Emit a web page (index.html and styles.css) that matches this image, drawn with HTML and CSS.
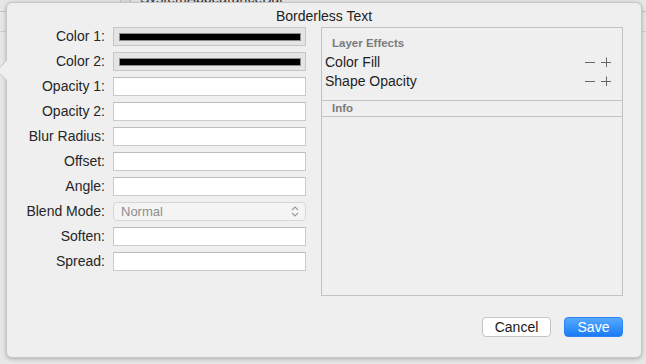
FILE: index.html
```html
<!DOCTYPE html>
<html lang="en">
<head>
  <meta charset="UTF-8" />
  <title>Borderless Text</title>
  <link rel="stylesheet" href="styles.css">
</head>
<body>

  <div class="backdrop">
    <div class="toolbar">
      <span class="tab-edge"></span>
      <span class="tab-title">SystemAppearanceBar</span>
    </div>
    <div class="strip"></div>
  </div>

  <div class="popover">
    <h1 class="title">Borderless Text</h1>

    <div class="content">
      <form class="fields">
        <label>Color 1:</label>
        <div class="well"><span></span></div>

        <label>Color 2:</label>
        <div class="well"><span></span></div>

        <label>Opacity 1:</label>
        <input type="text" />

        <label>Opacity 2:</label>
        <input type="text" />

        <label>Blur Radius:</label>
        <input type="text" />

        <label>Offset:</label>
        <input type="text" />

        <label>Angle:</label>
        <input type="text" />

        <label>Blend Mode:</label>
        <div class="select">
          <span>Normal</span>
          <svg width="8" height="11" viewBox="0 0 8 11">
            <path d="M1 4 L4 1 L7 4 M1 7 L4 10 L7 7" fill="none" stroke="#9a9a9a" stroke-width="1.1" />
          </svg>
        </div>

        <label>Soften:</label>
        <input type="text" />

        <label>Spread:</label>
        <input type="text" />
      </form>

      <div class="panel">
        <div class="effects">
          <h2>Layer Effects</h2>
          <div class="effect">
            <span>Color Fill</span>
            <span class="ctrls">
              <svg width="10" height="10" viewBox="0 0 10 10"><path d="M0 5.5 H10" stroke="#666" /></svg>
              <svg width="10" height="10" viewBox="0 0 10 10"><path d="M0 5.5 H10 M5.5 0.5 V10.5" stroke="#666" /></svg>
            </span>
          </div>
          <div class="effect">
            <span>Shape Opacity</span>
            <span class="ctrls">
              <svg width="10" height="10" viewBox="0 0 10 10"><path d="M0 5.5 H10" stroke="#666" /></svg>
              <svg width="10" height="10" viewBox="0 0 10 10"><path d="M0 5.5 H10 M5.5 0.5 V10.5" stroke="#666" /></svg>
            </span>
          </div>
        </div>
        <h2 class="info-head">Info</h2>
        <div class="info"></div>
      </div>
    </div>

    <div class="buttons">
      <button class="btn">Cancel</button>
      <button class="btn primary">Save</button>
    </div>
  </div>

</body>
</html>
```

FILE: styles.css
```css
* {
  margin: 0;
  padding: 0;
  box-sizing: border-box;
}

body {
  font-family: 'Liberation Sans', Arial, sans-serif;
  font-size: 14px;
  color: #1e1e1e;
  background: #e7e7e7;
  width: 646px;
  height: 364px;
  overflow: hidden;
  position: relative;
}

/* window behind the popover */
.toolbar {
  height: 12px;
  border-bottom: 1px solid #c4c4c4;
  display: flex;
  align-items: flex-end;
  overflow: hidden;
}

.tab-edge {
  width: 11px;
  height: 12px;
  margin-left: 120px;
  border-left: 1px solid #c8c8c8;
  border-right: 1px solid #b8b8b8;
  background: #dcdcdc;
}

.tab-title {
  font-size: 14px;
  line-height: 14px;
  margin-left: 9px;
  margin-bottom: 6px;
  color: #333;
}

.strip {
  height: 20px;
  border-bottom: 1px solid #cfcfcf;
}

/* popover sheet */
.popover {
  position: absolute;
  left: 6px;
  top: 2px;
  width: 636px;
  height: 356px;
  background: #efefef;
  border: 1px solid #c6c6c6;
  border-radius: 6px;
  box-shadow: 0 1px 4px rgba(0, 0, 0, 0.25);
  display: flex;
  flex-direction: column;
}

.popover::before {
  content: '';
  position: absolute;
  left: -8px;
  top: 60px;
  width: 14px;
  height: 14px;
  background: #efefef;
  border-left: 1px solid #c6c6c6;
  border-bottom: 1px solid #c6c6c6;
  transform: rotate(45deg);
}

.title {
  font-size: 14px;
  font-weight: normal;
  text-align: center;
  line-height: 16px;
  padding: 5px 0 3px;
  color: #222;
}

.content {
  display: flex;
  height: 269px;
  padding-right: 18px;
}

.fields {
  display: grid;
  grid-template-columns: 98px 193px;
  grid-auto-rows: 19px;
  column-gap: 8px;
  row-gap: 6px;
  align-content: start;
  width: 299px;
}

.fields label {
  text-align: right;
  line-height: 19px;
  color: #262626;
  white-space: nowrap;
}

.fields input {
  height: 19px;
  border: 1px solid #cacaca;
  border-top-color: #bdbdbd;
  background: #fff;
  outline: none;
}

.well {
  border: 1px solid #c6c6c6;
  background: #e4e4e4;
  padding: 5px 4px 5px 5px;
}

.well span {
  display: block;
  height: 8px;
  background: #000;
  border: 1px solid #8c8c8c;
}

.select {
  display: flex;
  align-items: center;
  justify-content: space-between;
  padding: 0 6px 0 7px;
  border: 1px solid #d6d6d6;
  border-radius: 4px;
  background: #f4f4f4;
  color: #8e8e8e;
  font-size: 13px;
}

.panel {
  flex: 1;
  margin-left: 15px;
  border: 1px solid #c2c2c2;
  display: flex;
  flex-direction: column;
}

.panel h2 {
  font-size: 11.5px;
  font-weight: bold;
  color: #7b7b7b;
  padding-left: 10px;
}

.effects {
  height: 72px;
  padding-top: 8px;
}

.effects h2 {
  line-height: 14px;
  margin-bottom: 2px;
}

.effect {
  display: flex;
  justify-content: space-between;
  align-items: center;
  height: 19px;
  padding: 0 11px 0 3px;
  color: #1e1e1e;
}

.ctrls {
  display: flex;
  align-items: center;
  gap: 6px;
}

.info-head {
  line-height: 15px;
  border-top: 1px solid #c2c2c2;
  border-bottom: 1px solid #c2c2c2;
}

.info {
  flex: 1;
}

.buttons {
  display: flex;
  justify-content: flex-end;
  gap: 13px;
  padding: 21px 18px 0 0;
}

.btn {
  height: 20px;
  width: 69px;
  font-family: inherit;
  font-size: 14px;
  color: #1a1a1a;
  background: #fff;
  border: 1px solid #c4c4c4;
  border-radius: 4px;
}

.btn.primary {
  width: 59px;
  color: #fff;
  border: 1px solid #2c84f3;
  background: linear-gradient(#56a9fc, #1a7bf5);
}
```
